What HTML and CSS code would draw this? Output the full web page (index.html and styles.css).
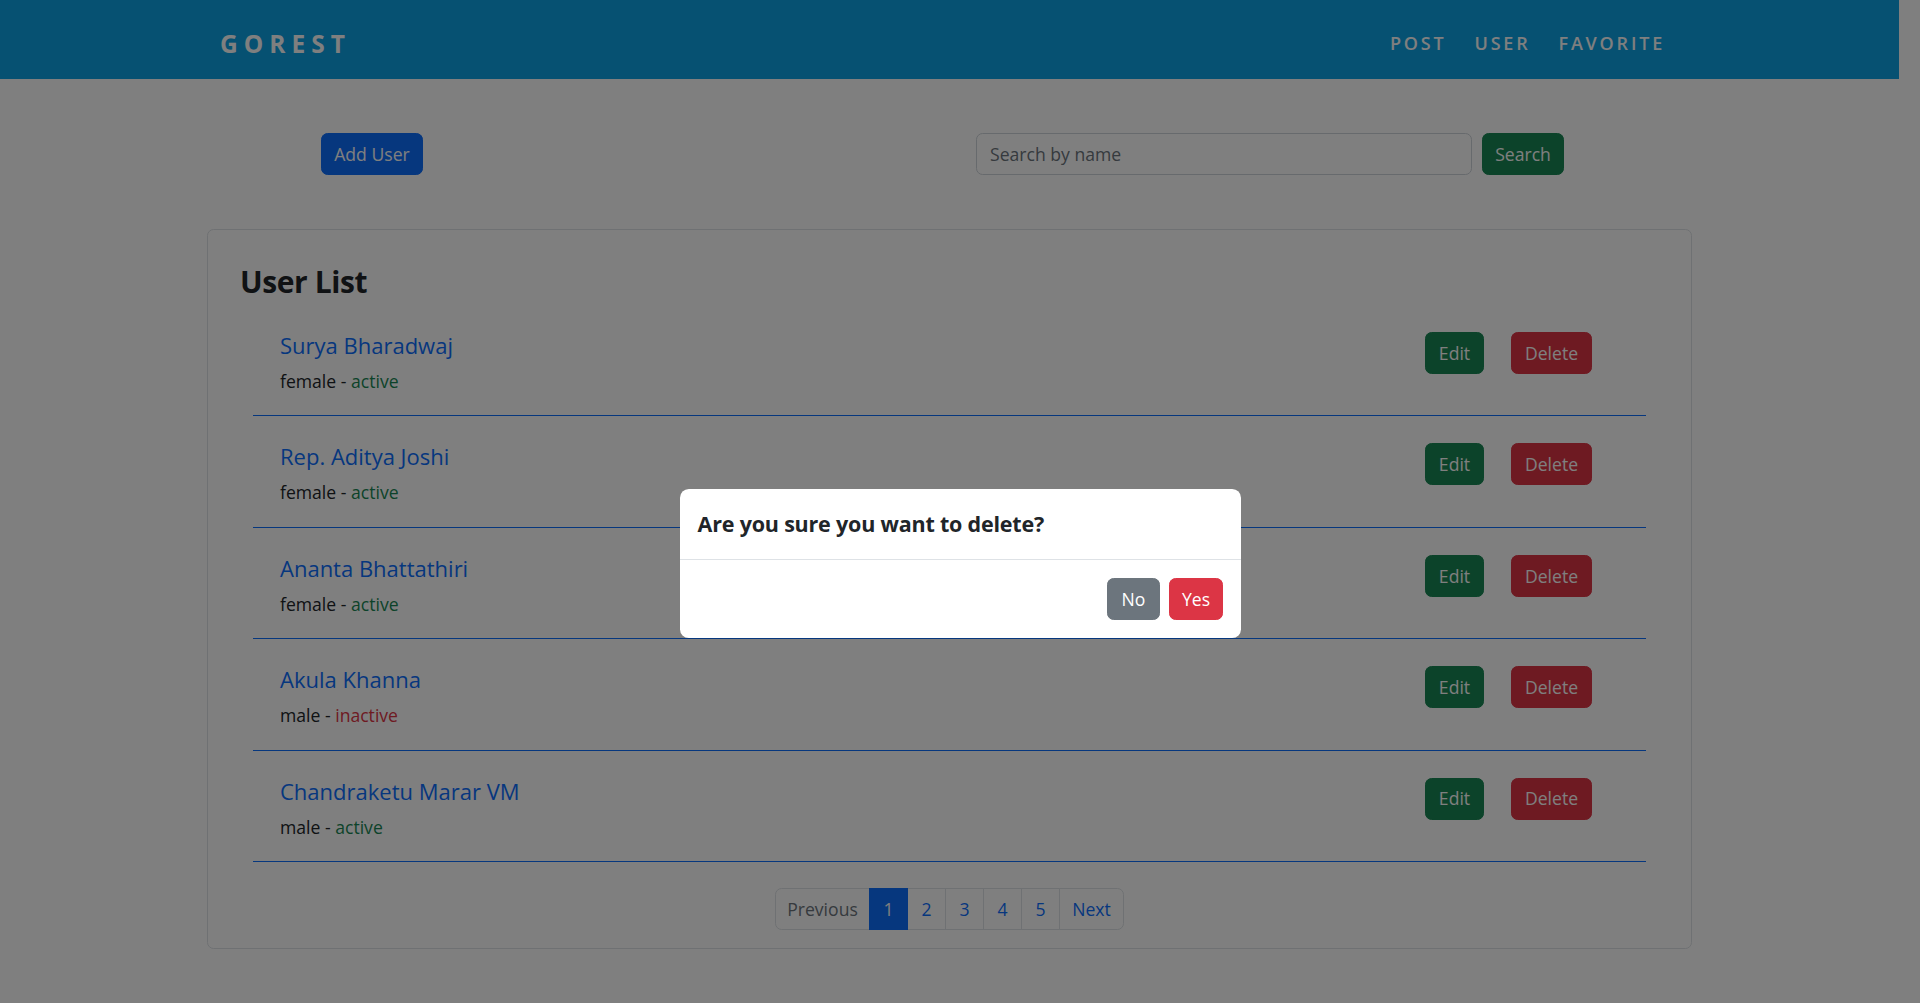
FILE: index.html
```html
<!DOCTYPE html>
<html lang="en">
<head>
<meta charset="utf-8">
<title>GoRest Users</title>
<link rel="stylesheet" href="styles.css">
</head>
<body>
<header class="navbar">
  <a class="brand" href="#">GOREST</a>
  <nav class="nav">
    <a href="#">POST</a>
    <a href="#">USER</a>
    <a href="#">FAVORITE</a>
  </nav>
</header>

<main class="container">
  <div class="toolbar">
    <button class="btn btn-primary btn-add">Add User</button>
    <form class="search">
      <input class="search-input" type="text" placeholder="Search by name">
      <button class="btn btn-success btn-search" type="button">Search</button>
    </form>
  </div>

  <section class="card">
    <h3 class="card-title">User List</h3>
    <ul class="user-list">
      <li class="user">
        <div class="user-info">
          <a class="user-name" href="#">Surya Bharadwaj</a>
          <p class="user-meta">female - <span class="st-active">active</span></p>
        </div>
        <div class="user-actions">
          <button class="btn btn-success btn-edit">Edit</button>
          <button class="btn btn-danger btn-delete">Delete</button>
        </div>
      </li>
      <li class="user">
        <div class="user-info">
          <a class="user-name" href="#">Rep. Aditya Joshi</a>
          <p class="user-meta">female - <span class="st-active">active</span></p>
        </div>
        <div class="user-actions">
          <button class="btn btn-success btn-edit">Edit</button>
          <button class="btn btn-danger btn-delete">Delete</button>
        </div>
      </li>
      <li class="user">
        <div class="user-info">
          <a class="user-name" href="#">Ananta Bhattathiri</a>
          <p class="user-meta">female - <span class="st-active">active</span></p>
        </div>
        <div class="user-actions">
          <button class="btn btn-success btn-edit">Edit</button>
          <button class="btn btn-danger btn-delete">Delete</button>
        </div>
      </li>
      <li class="user">
        <div class="user-info">
          <a class="user-name" href="#">Akula Khanna</a>
          <p class="user-meta">male - <span class="st-inactive">inactive</span></p>
        </div>
        <div class="user-actions">
          <button class="btn btn-success btn-edit">Edit</button>
          <button class="btn btn-danger btn-delete">Delete</button>
        </div>
      </li>
      <li class="user">
        <div class="user-info">
          <a class="user-name" href="#">Chandraketu Marar VM</a>
          <p class="user-meta">male - <span class="st-active">active</span></p>
        </div>
        <div class="user-actions">
          <button class="btn btn-success btn-edit">Edit</button>
          <button class="btn btn-danger btn-delete">Delete</button>
        </div>
      </li>
    </ul>
    <nav class="pager">
      <ul class="pagination">
        <li class="page page-prev disabled"><span>Previous</span></li>
        <li class="page page-num active"><span>1</span></li>
        <li class="page page-num"><span>2</span></li>
        <li class="page page-num"><span>3</span></li>
        <li class="page page-num"><span>4</span></li>
        <li class="page page-num"><span>5</span></li>
        <li class="page page-next"><span>Next</span></li>
      </ul>
    </nav>
  </section>
</main>

<div class="backdrop"></div>
<div class="modal">
  <div class="modal-header">
    <h5 class="modal-title">Are you sure you want to delete?</h5>
  </div>
  <div class="modal-footer">
    <button class="btn btn-secondary btn-no">No</button>
    <button class="btn btn-danger btn-yes">Yes</button>
  </div>
</div>
</body>
</html>
```
FILE: styles.css
```css
* { box-sizing: border-box; }
html, body { margin: 0; }
body {
  background: #ffffff;
  font-family: "Open Sans", "Liberation Sans", sans-serif;
  font-size: 17.6px;
  line-height: 1.5;
  color: #212529;
  padding-right: 21px;
  overflow: hidden;
}

.navbar {
  height: 79px;
  background: #0ca2e4;
  display: flex;
  align-items: center;
  justify-content: space-between;
  padding: 8px 234px 0 220px;
}
.brand {
  color: #ffffff;
  text-decoration: none;
  font-weight: 700;
  font-size: 24.5px;
  letter-spacing: 6px;
  margin-top: 2px;
}
.nav { display: flex; gap: 28px; }
.nav a {
  color: #ffffff;
  text-decoration: none;
  font-weight: 600;
  font-size: 18px;
  letter-spacing: 2.8px;
}

.container {
  width: 1485px;
  margin: 0 auto;
}

.toolbar {
  display: flex;
  align-items: center;
  margin-top: 54px;
}

.btn {
  font-family: inherit;
  font-size: 17.6px;
  line-height: 26.4px;
  height: 42px;
  padding: 0 13px;
  border: 1px solid transparent;
  border-radius: 6.6px;
  color: #ffffff;
  cursor: pointer;
  white-space: nowrap;
}
.btn-primary { background: #0d6efd; border-color: #0d6efd; }
.btn-success { background: #198754; border-color: #198754; }
.btn-danger { background: #dc3545; border-color: #dc3545; }
.btn-secondary { background: #6c757d; border-color: #6c757d; }

.btn-add { margin-left: 114px; width: 102px; padding: 0; }

.search {
  display: flex;
  gap: 10px;
  margin: 0 128px 0 auto;
}
.search-input {
  width: 496px;
  height: 42px;
  border: 1px solid #ced4da;
  border-radius: 6.6px;
  padding: 0 13px;
  font-family: inherit;
  font-size: 17.6px;
  color: #212529;
}
.search-input::placeholder { color: #6c757d; }
.btn-search { width: 82px; padding: 0; }

.card {
  margin-top: 54px;
  border: 1px solid #dee2e6;
  border-radius: 6.6px;
  height: 720px;
  padding: 33px 45px 17px;
}
.card-title {
  margin: 0 0 5px -13px;
  font-size: 30px;
  line-height: 37px;
  font-weight: 700;
  letter-spacing: -0.4px;
}

.user-list {
  list-style: none;
  margin: 0;
  padding: 0;
}
.user {
  display: flex;
  justify-content: space-between;
  align-items: flex-start;
  padding: 27px 54px 21px 27px;
  border-bottom: 1px solid #0d6efd;
}
.user-name {
  display: block;
  color: #0d6efd;
  text-decoration: none;
  font-size: 22px;
  line-height: 26px;
  margin-bottom: 10px;
}
.user-meta { margin: 0; line-height: 26.4px; }
.st-active { color: #198754; }
.st-inactive { color: #dc3545; }

.user-actions { display: flex; gap: 27px; }
.btn-edit { width: 59px; padding: 0; }
.btn-delete { width: 81px; padding: 0; }

.pager {
  display: flex;
  justify-content: center;
  margin-top: 26px;
}
.pagination {
  display: flex;
  list-style: none;
  margin: 0;
  padding: 0;
}
.page span {
  display: flex;
  align-items: center;
  justify-content: center;
  height: 42px;
  border: 1px solid #dee2e6;
  margin-left: -1px;
  color: #0d6efd;
  background: #ffffff;
}
.page-prev span { width: 95px; margin-left: 0; border-radius: 6.6px 0 0 6.6px; }
.page-num span { width: 39px; }
.page-next span { width: 65px; border-radius: 0 6.6px 6.6px 0; }
.page.disabled span { color: #6c757d; }
.page.active span { background: #0d6efd; border-color: #0d6efd; color: #ffffff; position: relative; }

.backdrop {
  position: fixed;
  inset: 0;
  background: rgba(0, 0, 0, 0.5);
}
.modal {
  position: fixed;
  top: 489px;
  left: 680px;
  width: 561px;
  background: #ffffff;
  border-radius: 8.8px;
}
.modal-header {
  padding: 17.6px 17.6px 19.6px;
  border-bottom: 1px solid #dee2e6;
}
.modal-title {
  margin: 0;
  font-size: 21.5px;
  line-height: 33px;
  font-weight: 700;
  letter-spacing: -0.2px;
}
.modal-footer {
  display: flex;
  justify-content: flex-end;
  gap: 9px;
  padding: 18px;
}
.btn-no { width: 53px; padding: 0; }
.btn-yes { width: 54px; padding: 0; }
```
